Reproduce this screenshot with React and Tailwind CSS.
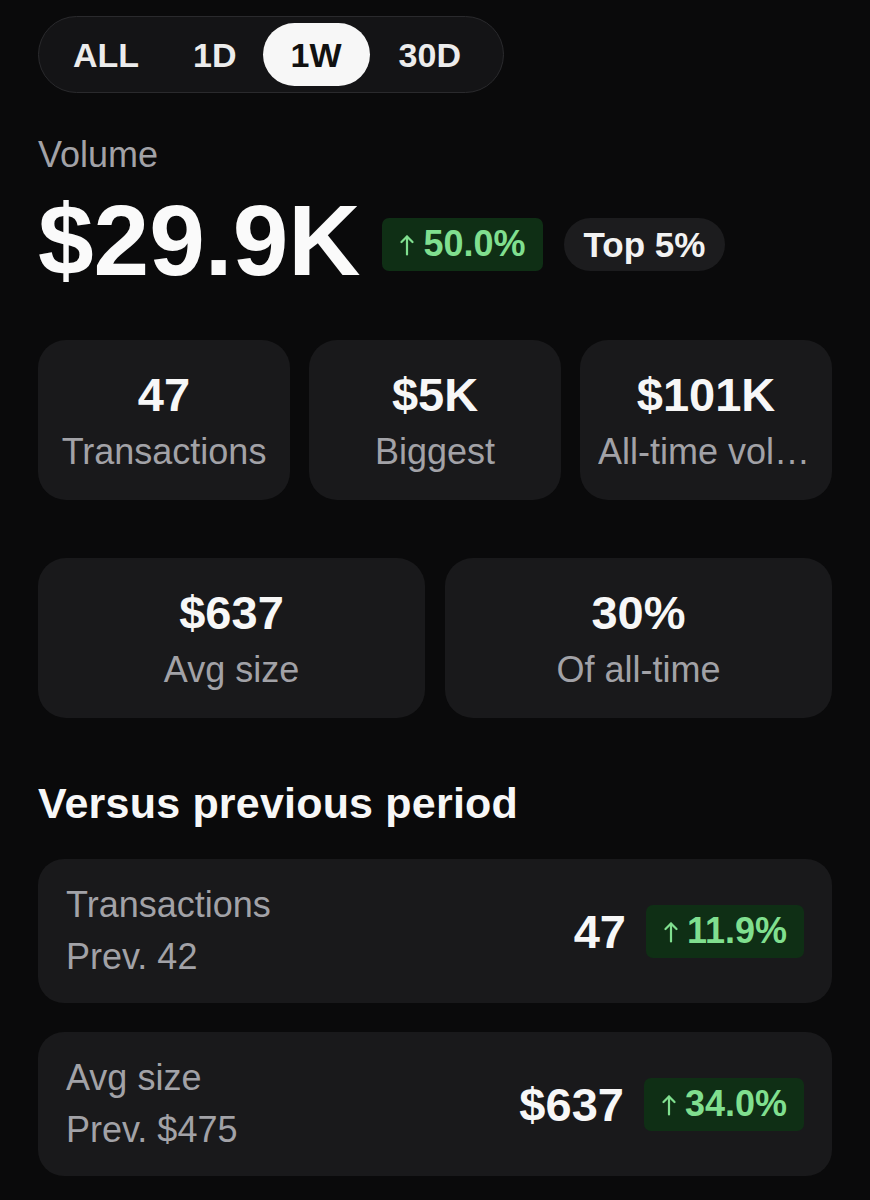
import React from "react";

function UpArrow({ className = "" }) {
  return (
    <svg className={className} width="14" height="22" viewBox="0 0 14 22" fill="none" stroke="currentColor" strokeWidth="2.2" strokeLinecap="round" strokeLinejoin="round">
      <path d="M7 20.5V2.5" />
      <path d="M1.5 8L7 2.5L12.5 8" />
    </svg>
  );
}

function GreenBadge({ children, className = "" }) {
  return (
    <div className={`flex h-[53px] items-center gap-[9px] rounded-[7px] bg-[#0f2f15] pl-[18px] pr-[17px] text-[#80df8f] ${className}`}>
      <UpArrow className="mt-[1px]" />
      <span className="text-[36px] leading-none font-bold">{children}</span>
    </div>
  );
}

function StatCard({ value, label }) {
  return (
    <div className="flex h-[160px] min-w-0 flex-col items-center justify-center rounded-[28px] bg-[#19191b] px-[18px]">
      <div className="text-[47px] leading-[54px] font-bold text-[#f7f7f7]">{value}</div>
      <div className="mt-[9px] w-full truncate text-center text-[36px] leading-[42px] text-[#a2a2a7]">{label}</div>
    </div>
  );
}

function CompareCard({ title, prev, value, change }) {
  return (
    <div className="flex h-[144px] items-center justify-between rounded-[26px] bg-[#19191b] px-[28px]">
      <div className="text-[36px] leading-[52px] text-[#a2a2a7]">
        <div>{title}</div>
        <div>{prev}</div>
      </div>
      <div className="flex items-center gap-[20px]">
        <div className="text-[47px] leading-none font-bold text-[#f7f7f7]">{value}</div>
        <GreenBadge>{change}</GreenBadge>
      </div>
    </div>
  );
}

export default function App() {
  const tabs = [
    { label: "ALL", px: "px-[28px]" },
    { label: "1D", px: "px-[26px]" },
    { label: "1W", px: "px-[28px]", active: true },
    { label: "30D", px: "pl-[29px] pr-[36px]" },
  ];
  return (
    <div className="min-h-[1200px] bg-[#0a0a0b] px-[38px] pt-[16px] pb-[20px] font-['Liberation_Sans',Arial,sans-serif] text-white">
      <div className="inline-flex h-[77px] items-center rounded-full border border-[#2a2a2d] bg-[#141416] p-[6px]">
        {tabs.map((t) => (
          <div
            key={t.label}
            className={`flex h-[63px] items-center rounded-full ${t.px} text-[34px] leading-none font-bold ${
              t.active ? "bg-[#f7f7f7] text-[#111111]" : "text-[#ececec]"
            }`}
          >
            {t.label}
          </div>
        ))}
      </div>

      <div className="mt-[42px] text-[36px] leading-[40px] text-[#a2a2a7]">Volume</div>

      <div className="mt-[17px] flex items-center">
        <div className="text-[100px] leading-[96px] font-bold text-[#fafafa]">$29.9K</div>
        <div className="mt-[8px] ml-[22px] flex items-center gap-[21px]">
          <GreenBadge>50.0%</GreenBadge>
          <div className="flex h-[53px] items-center rounded-full bg-[#1c1c1e] px-[20px] text-[35px] leading-none font-bold text-[#f2f2f2]">
            Top 5%
          </div>
        </div>
      </div>

      <div className="mt-[52px] grid grid-cols-3 gap-[19px]">
        <StatCard value="47" label="Transactions" />
        <StatCard value="$5K" label="Biggest" />
        <StatCard value="$101K" label="All-time volume" />
      </div>

      <div className="mt-[58px] grid grid-cols-2 gap-[20px]">
        <StatCard value="$637" label="Avg size" />
        <StatCard value="30%" label="Of all-time" />
      </div>

      <div className="mt-[60px] text-[43px] leading-[50px] font-bold tracking-[0.2px] text-[#f7f7f7]">
        Versus previous period
      </div>

      <div className="mt-[31px] flex flex-col gap-[29px]">
        <CompareCard title="Transactions" prev="Prev. 42" value="47" change="11.9%" />
        <CompareCard title="Avg size" prev="Prev. $475" value="$637" change="34.0%" />
      </div>
    </div>
  );
}
